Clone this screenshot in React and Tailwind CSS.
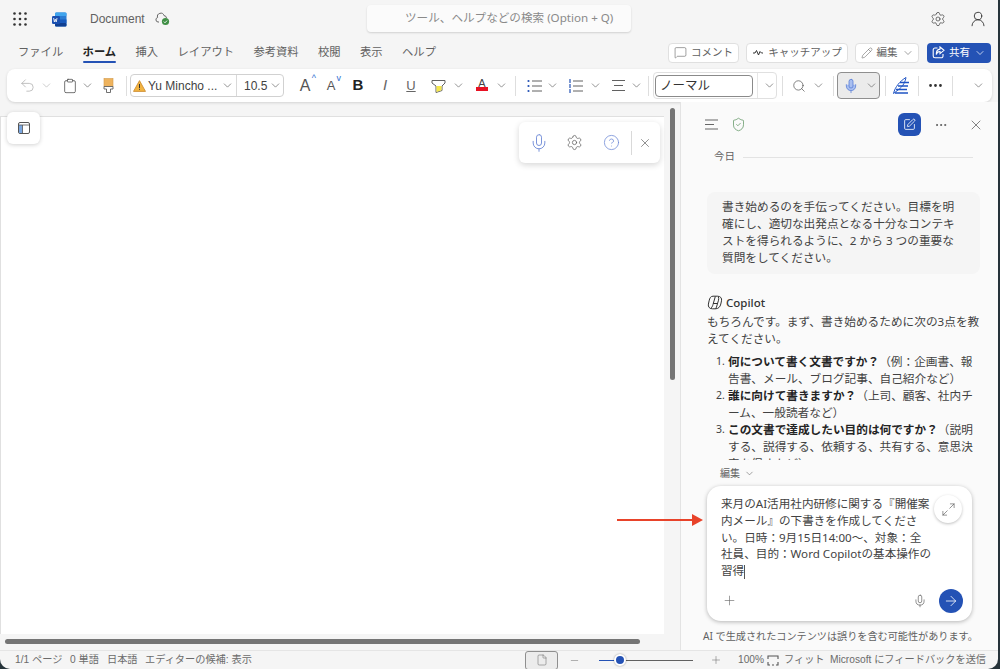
import React from "react";
import {
  Settings, UserRound, MessageSquare, Pencil, ChevronDown, Undo2, Clipboard, Search, Mic, X, CircleHelp,
  Ellipsis, Plus, ArrowRight, Maximize2, Minus, File, SquarePen, ShieldCheck,
} from "lucide-react";

const Chev = ({ w = "w-[14px]", ml = "", color = "text-[#616161]" }) => (
  <span className={`${w} ${ml} flex justify-center ${color}`}><ChevronDown size={13} strokeWidth={1.25} /></span>
);
const Sep = ({ ml }) => <span className={`w-px h-[20px] bg-[#dedede] ${ml}`} />;
const Cell = ({ ml = "", children, cls = "" }) => <span className={`w-[20px] ${ml} flex justify-center items-center ${cls}`}>{children}</span>;

const Grid = () => (
  <svg width="14" height="14" viewBox="0 0 14 14" fill="#333">
    {[1.5, 7, 12.5].map((y) => [1.5, 7, 12.5].map((x) => <circle key={`${x}-${y}`} cx={x} cy={y} r="1.3" />))}
  </svg>
);
const WordLogo = () => (
  <svg width="15" height="15" viewBox="0 0 15 15">
    <rect x="3" y="0.5" width="11.5" height="14" rx="1.5" fill="#2b7cd3" />
    <rect x="3" y="0.5" width="11.5" height="3.5" rx="1" fill="#41a5ee" />
    <rect x="3" y="7.5" width="11.5" height="3.5" fill="#185abd" />
    <rect x="3" y="11" width="11.5" height="3.5" rx="1" fill="#103f91" />
    <rect x="0" y="4" width="8" height="8" rx="1.2" fill="#1a4fb0" />
    <path d="M1.6 6l.8 4 .9-2.8.9 2.8.8-4" stroke="#fff" strokeWidth=".8" fill="none" />
  </svg>
);
const CloudOk = () => (
  <svg width="15" height="14" viewBox="0 0 15 14" fill="none">
    <path d="M4 10H3a2.3 2.3 0 0 1-.4-4.5A3.3 3.3 0 0 1 9 3.6 2.7 2.7 0 0 1 11.5 6" stroke="#666" strokeWidth="1" />
    <circle cx="10.5" cy="9.5" r="3.6" fill="#3f8f45" />
    <path d="M8.8 9.6l1.2 1.2 2-2.2" stroke="#fff" strokeWidth=".9" />
  </svg>
);
const Brush = () => (
  <svg width="11" height="15" viewBox="0 0 11 15" fill="none">
    <rect x="1" y="0.5" width="9" height="8" fill="#eeb35e" stroke="#d39a48" strokeWidth=".6" />
    <path d="M1 8.5h9v2.5H7.5v3.5h-4V11H1z" fill="#fff" stroke="#616161" strokeWidth=".9" />
  </svg>
);
const Warn = () => (
  <svg width="13" height="12" viewBox="0 0 13 12">
    <path d="M6.5.6l6 10.8H.5z" fill="#f2b441" stroke="#c9872a" strokeWidth=".8" strokeLinejoin="round" />
    <rect x="6" y="4" width="1" height="4" fill="#333" />
    <rect x="6" y="8.8" width="1" height="1" fill="#333" />
  </svg>
);
const List = ({ kind }) => (
  <svg width="15" height="14" viewBox="0 0 15 14" fill="none">
    {[2, 7, 12].map((y) => (
      <g key={y}>
        <path d={`M5 ${y}H15`} stroke="#616161" strokeWidth="1" />
        {kind === "b" ? <circle cx="1.5" cy={y} r="1.1" fill="#2452b5" /> : <path d={`M2 ${y - 2}v4`} stroke="#2452b5" strokeWidth="1.2" />}
      </g>
    ))}
  </svg>
);
const Align = () => (
  <svg width="15" height="13" viewBox="0 0 15 13" stroke="#616161" strokeWidth="1"><path d="M1 1.5H14M3 6.5H12M1 11.5H14" /></svg>
);
const EditorPen = () => (
  <svg width="19" height="19" viewBox="0 0 19 19" fill="none" stroke="#1f54c4">
    <path d="M1.5 17.5C3 11 8 5 14 1.5c-.5 3-2.5 9-8 12.5z" strokeWidth="1" />
    <path d="M8 6.5h9M6 10h10M4 13.5h11M3 17h13" strokeWidth="1.5" />
  </svg>
);
const Pane = () => (
  <svg width="12" height="12" viewBox="0 0 12 12" fill="none">
    <rect x=".5" y=".5" width="11" height="11" rx="1.5" stroke="#555" />
    <rect x="1" y="3" width="3.5" height="8" fill="#7ba7e0" />
    <path d="M.5 3h11M4.5 3v8.5" stroke="#555" strokeWidth=".8" />
  </svg>
);
const Lines = () => (
  <svg width="14" height="11" viewBox="0 0 14 11" stroke="#666" strokeWidth="1"><path d="M0 1H13M0 5.5H9M0 10H13" /></svg>
);
const CopilotMark = () => (
  <svg width="16" height="15" viewBox="0 0 16 15" fill="none" stroke="#333" strokeWidth="1">
    <path d="M6 1.2h4.5c3 0 4.6 2 4 4.6l-.7 3.2c-.6 3-2.6 4.8-5.3 4.8H5.500c-3 0-4.700-2-4.100-4.700l.7-3.200C2.700 3 3.700 1.200 6 1.200z" />
    <path d="M8.300 1.500L6 9.500c-.4 1.600-1.300 3.300-2.400 4M11.300 1.800c.5 1 .5 2.200.2 3.400L9.500 12c-.2.700-.6 1.300-1.200 1.700M6 8.500h4" />
  </svg>
);
const FitIcon = () => (
  <svg width="12" height="11" viewBox="0 0 12 11" stroke="#555" strokeWidth="1.1" fill="none">
    <path d="M1 4V1h10v3M1 7v3h2M11 7v3H9" /><path d="M5 10h2" />
  </svg>
);
const ShareIcon = () => (
  <svg width="13" height="13" viewBox="0 0 13 13" fill="none" stroke="#fff" strokeWidth="1.100">
    <path d="M5.500 2H3a1.800 1.800 0 0 0-1.800 1.800V10A1.800 1.800 0 0 0 3 11.800h6.200A1.800 1.800 0 0 0 11 10V8" />
    <path d="M8 1l4 3.300-4 3.300V5.500C6 5.500 4.800 6.500 4.300 8.500 4.200 5.200 5.800 3.300 8 3.100z" />
  </svg>
);

const latin = "font-['Liberation_Sans','Noto_Sans_CJK_JP',sans-serif]";

const Toolbar = () => (
  <div className="mx-[7px] h-[33px] w-[985px] bg-white rounded-[8px] shadow-[0_1px_3px_rgba(0,0,0,0.14)] flex items-center pl-[10px] text-[#424242]">
    <Cell><Undo2 size={17} strokeWidth={1} className="text-[#a8a8a8]" /></Cell>
    <Chev w="w-[18px]" color="text-[#b5b5b5]" />
    <Cell ml="ml-[5px]"><Clipboard size={16} strokeWidth={1.1} /></Cell>
    <Chev />
    <Cell ml="ml-[4px]"><Brush /></Cell>
    <Sep ml="ml-[8px]" />
    <div className={`ml-[3px] w-[154px] h-[23px] border border-[#d1d1d1] rounded-[4px] flex items-center text-[12px] ${latin}`}>
      <span className="ml-[2px]"><Warn /></span>
      <span className="ml-[2px] w-[70px] whitespace-nowrap">Yu Mincho ...</span>
      <Chev ml="ml-[2px]" />
      <span className="ml-[2px] w-px h-full bg-[#d9d9d9]" />
      <span className="ml-[7px] w-[22px]">10.5</span>
      <Chev ml="ml-[2px]" />
    </div>
    <Cell ml="ml-[11px]" cls={`relative text-[16px] text-[#555] ${latin}`}>A<span className="absolute right-[-1px] top-[-2px] text-[9px] text-[#2f6fd1]">^</span></Cell>
    <Cell ml="ml-[6px]" cls={`relative text-[13px] text-[#555] ${latin}`}>A<span className="absolute right-[0px] top-[-4px] text-[9px] text-[#2f6fd1]">v</span></Cell>
    <Cell ml="ml-[7px]" cls={`text-[15px] font-bold text-[#222] ${latin}`}>B</Cell>
    <Cell ml="ml-[7px]" cls={`text-[15px] italic text-[#666] ${latin}`}>I</Cell>
    <Cell ml="ml-[6px]" cls={`text-[13px] underline text-[#666] ${latin}`}>U</Cell>
    <Cell ml="ml-[7px]">
      <svg width="15" height="14" viewBox="0 0 15 14" fill="none">
        <path d="M1 1.500h13v2.500L11 7v4.500l-6 2V7L1 4z" fill="#fff" stroke="#616161" />
        <path d="M5.500 7h5v4.200l-5 1.700z" fill="#f5e84a" />
      </svg>
    </Cell>
    <Chev ml="ml-[3px]" />
    <Cell ml="ml-[7px]" cls={`relative ${latin}`}>
      <span className="text-[11px] leading-[11px] mt-[-5px]">A</span>
      <span className="absolute left-[4px] bottom-[-2px] w-[12px] h-[4px] bg-[#e81123]" />
    </Cell>
    <Chev ml="ml-[2px]" />
    <Sep ml="ml-[7px]" />
    <Cell ml="ml-[8px]"><List kind="b" /></Cell>
    <Chev ml="ml-[1px]" />
    <Cell ml="ml-[6px]"><List kind="n" /></Cell>
    <Chev ml="ml-[3px]" />
    <Cell ml="ml-[6px]"><Align /></Cell>
    <Chev ml="ml-[1px]" />
    <Sep ml="ml-[5px]" />
    <div className="ml-[4px] w-[124px] h-[27px] border border-[#e0e0e0] rounded-[4px] flex items-center">
      <span className="ml-[1px] w-[101px] h-[22px] border border-[#8a8a8a] rounded-[4px] pl-[4px] text-[12.5px] leading-[20px] text-[#333]">ノーマル</span>
      <span className="ml-[4px] w-px h-full bg-[#e6e6e6]" />
      <span className="ml-[5px]"><ChevronDown size={13} strokeWidth={1.25} className="text-[#616161]" /></span>
    </div>
    <Sep ml="ml-[5px]" />
    <Cell ml="ml-[6px]"><Search size={14} strokeWidth={1.1} /></Cell>
    <Chev ml="ml-[2px]" />
    <Sep ml="ml-[8px]" />
    <div className="ml-[3px] w-[43px] h-[27px] bg-[#ebebeb] border border-[#8f8f8f] rounded-[4px] flex items-center pl-[5px]">
      <Mic size={16} strokeWidth={1.2} className="text-[#5b7fd6] fill-[#a9bff0]" />
      <span className="ml-[6px]"><ChevronDown size={13} strokeWidth={1.25} className="text-[#616161]" /></span>
    </div>
    <Sep ml="ml-[5px]" />
    <Cell ml="ml-[5px]"><EditorPen /></Cell>
    <Sep ml="ml-[7px]" />
    <Cell ml="ml-[6px]"><Ellipsis size={17} strokeWidth={2} className="text-[#333]" /></Cell>
    <Sep ml="ml-[7px]" />
    <Chev ml="ml-[18px]" />
  </div>
);

const Tab = ({ children, active }) => (
  <span className={`relative whitespace-nowrap ${active ? "font-bold text-[#242424]" : "text-[#616161]"}`}>
    {children}
    {active && <span className="absolute left-0 right-0 bottom-[-3px] h-[2px] bg-[#2452b5] rounded" />}
  </span>
);
const Btn = ({ w, ml, children }) => (
  <div className={`${w} ${ml} h-[20px] bg-white border border-[#e0e0e0] rounded-[4px] flex items-center justify-center gap-[4px] text-[10.500px] text-[#616161] whitespace-nowrap`}>{children}</div>
);

const Ln = ({ children }) => <span className="block whitespace-nowrap">{children}</span>;
const Num = ({ n }) => <span className="block relative w-0 h-0 left-[-12px] text-[10.500px] leading-[17px]">{n}</span>;

const Copilot = () => (
  <div className="w-[320px] h-full bg-[#fafafa] border-l border-[#e3e3e3] flex flex-col text-[#424242] shrink-0">
    <div className="h-[44px] flex items-center pt-[1px] pl-[24px] shrink-0">
      <Lines />
      <span className="ml-[12px]"><ShieldCheck size={15} strokeWidth={1.1} className="text-[#4f8a53]" /></span>
      <span className="ml-[152px] w-[23px] h-[23px] rounded-[6px] bg-[#2452b5] flex items-center justify-center text-white"><SquarePen size={13} strokeWidth={1.5} /></span>
      <span className="ml-[13px]"><Ellipsis size={14} strokeWidth={1.6} className="text-[#555]" /></span>
      <span className="ml-[20px]"><X size={16} strokeWidth={1.1} className="text-[#555]" /></span>
    </div>
    <div className="h-[314px] overflow-hidden shrink-0 pl-[26px] text-[11.670px] leading-[17px]">
      <div className="flex items-center h-[20px] text-[10.500px] text-[#616161] pl-[7px]">
        今日<span className="ml-[8px] mt-[2px] w-[230px] h-px bg-[#e3e3e3]" />
      </div>
      <div className="mt-[26px] w-[273px] h-[82px] bg-[#f5f5f5] rounded-[8px] pl-[15px] pt-[6px]">
        <Ln>書き始めるのを手伝ってください。目標を明</Ln>
        <Ln>確にし、適切な出発点となる十分なコンテキ</Ln>
        <Ln>ストを得られるように、2 から 3 つの重要な</Ln>
        <Ln>質問をしてください。</Ln>
      </div>
      <div className="mt-[19px] flex items-center h-[18px] text-[#333] font-medium text-[11.500px]">
        <CopilotMark /><span className="ml-[3px]">Copilot</span>
      </div>
      <div className="mt-[2px]">
        <Ln>もちろんです。まず、書き始めるために次の3点を教</Ln>
        <Ln>えてください。</Ln>
      </div>
      <div className="mt-[6px] pl-[21px]">
        <Num n="1." />
        <Ln><b className="text-[#242424]">何について書く文書ですか？</b>（例：企画書、報</Ln>
        <Ln>告書、メール、ブログ記事、自己紹介など）</Ln>
        <Num n="2." />
        <Ln><b className="text-[#242424]">誰に向けて書きますか？</b>（上司、顧客、社内チ</Ln>
        <Ln>ーム、一般読者など）</Ln>
        <Num n="3." />
        <Ln><b className="text-[#242424]">この文書で達成したい目的は何ですか？</b>（説明</Ln>
        <Ln>する、説得する、依頼する、共有する、意思決</Ln>
        <Ln>定を促すなど）</Ln>
      </div>
    </div>
    <div className="pl-[39px] mt-[5px] h-[16px] flex items-center text-[10px] text-[#616161]">
      編集<ChevronDown size={11} strokeWidth={1.25} className="ml-[4px]" />
    </div>
    <div className="relative ml-[26px] mt-[5px] w-[265px] h-[135px] bg-white rounded-[14px] shadow-[0_1px_4px_rgba(0,0,0,0.28)] shrink-0 flex flex-col">
      <div className="pl-[14px] pt-[10px] text-[11.600px] leading-[16.800px] text-[#424242]">
        <Ln>来月のAI活用社内研修に関する『開催案</Ln>
        <Ln>内メール』の下書きを作成してくださ</Ln>
        <Ln>い。日時：9月15日14:00〜、対象：全</Ln>
        <Ln>社員、目的：Word Copilotの基本操作の</Ln>
        <Ln>習得<span className="inline-block w-px h-[14px] bg-[#555] align-middle" /></Ln>
      </div>
      <span className="absolute right-[10px] top-[9px] w-[28px] h-[28px] rounded-full bg-white shadow-[0_1px_3px_rgba(0,0,0,0.25)] flex items-center justify-center text-[#555]"><Maximize2 size={15} strokeWidth={1} /></span>
      <div className="mt-auto h-[40px] flex items-center pl-[15px] pb-[1px]">
        <Plus size={15} strokeWidth={1} className="text-[#666]" />
        <Mic size={14} strokeWidth={1.1} className="ml-[176px] text-[#555]" />
        <span className="ml-[12px] w-[24px] h-[24px] rounded-full bg-[#2452b5] flex items-center justify-center text-white"><ArrowRight size={16} strokeWidth={1.2} /></span>
      </div>
    </div>
    <div className="ml-[22px] mt-[8px] text-[10.150px] leading-[14px] whitespace-nowrap text-[#616161]">AI で生成されたコンテンツは誤りを含む可能性があります。</div>
  </div>
);

export default function App() {
  return (
    <div className="relative w-[1000px] h-[669px] bg-[#26333a] overflow-hidden font-['Noto_Sans','Noto_Sans_CJK_JP',sans-serif]">
      <div className="w-[998px] h-full bg-[#f5f5f5] rounded-b-[10px] overflow-hidden flex flex-col">
        <div className="h-[38px] flex items-center shrink-0 relative">
          <span className="ml-[13px]"><Grid /></span>
          <span className="ml-[25px]"><WordLogo /></span>
          <span className={`ml-[23px] w-[54px] text-[12px] text-[#616161] ${latin}`}>Document</span>
          <span className="ml-[11px]"><CloudOk /></span>
          <div className="ml-[197px] mt-[-1px] w-[264px] h-[27px] bg-[#fbfbfb] rounded-[4px] shadow-[0_1px_2px_rgba(0,0,0,0.15)] pl-[38px] text-[11.600px] leading-[26px] text-[#8a8a8a] whitespace-nowrap">ツール、ヘルプなどの検索 (Option + Q)</div>
          <Settings size={16} strokeWidth={1.1} className="ml-[299px] text-[#424242]" />
          <UserRound size={18} strokeWidth={1.2} className="ml-[23px] text-[#333]" />
        </div>
        <div className="h-[31px] flex items-center shrink-0 pl-[18px] pb-[2px] text-[11.300px]">
          <div className="flex gap-[19.400px] w-[650px] mt-[-1px]">
            <Tab>ファイル</Tab><Tab active>ホーム</Tab><Tab>挿入</Tab><Tab>レイアウト</Tab><Tab>参考資料</Tab><Tab>校閲</Tab><Tab>表示</Tab><Tab>ヘルプ</Tab>
          </div>
          <Btn w="w-[71px]"><MessageSquare size={13} strokeWidth={1.1} />コメント</Btn>
          <Btn w="w-[102px]" ml="ml-[7px]">
            <svg width="12" height="8" viewBox="0 0 12 8" fill="none" stroke="#333"><path d="M1 4h2l1.500-2.500L6.500 6 8 2.500 9.500 4H11" /></svg>
            キャッチアップ
          </Btn>
          <Btn w="w-[64px]" ml="ml-[7px]"><Pencil size={12} strokeWidth={1.1} />編集<ChevronDown size={12} strokeWidth={1.2} /></Btn>
          <div className="ml-[8px] w-[64px] h-[20px] bg-[#2452b5] rounded-[4px] flex items-center justify-center gap-[4px] text-[10.500px] text-white">
            <ShareIcon />共有<ChevronDown size={12} strokeWidth={1.4} />
          </div>
        </div>
        <Toolbar />
        <div className="flex-1 min-h-0 flex relative">
          <div className="w-[680px] shrink-0 relative pt-[14px]">
            <div className="w-[664px] h-[518px] bg-white border-t border-l border-[#e0e0e0]" />
            <div className="absolute left-[7px] top-[10px] w-[33px] h-[32px] bg-white rounded-[6px] shadow-[0_1px_4px_rgba(0,0,0,0.18)] flex items-center justify-center"><Pane /></div>
            <div className="absolute left-[519px] top-[20px] w-[141px] h-[41px] bg-white rounded-[6px] shadow-[0_2px_6px_rgba(0,0,0,0.16)] flex items-center pl-[10px]">
              <Mic size={20} strokeWidth={1.1} className="text-[#6f8ad6]" />
              <Settings size={17} strokeWidth={1.1} className="ml-[17px] text-[#666]" />
              <CircleHelp size={17} strokeWidth={1.1} className="ml-[20px] text-[#6f8ad6]" />
              <span className="ml-[11px] w-px h-[24px] bg-[#d9d9d9]" />
              <X size={14} strokeWidth={1.1} className="ml-[6px] text-[#555]" />
            </div>
            <div className="absolute left-[670px] top-[6px] w-[5px] h-[272px] bg-[#757575] rounded-full" />
            <div className="absolute left-[5px] top-[537px] w-[635px] h-[5px] bg-[#757575] rounded-full" />
          </div>
          <Copilot />
        </div>
        <div className={`h-[19px] shrink-0 border-t border-[#e5e5e5] flex items-center pl-[15px] text-[10.200px] text-[#6b6b6b] whitespace-nowrap ${latin}`}>
          <span className="w-[55px]">1/1 ページ</span>
          <span className="w-[37px]">0 単語</span>
          <span className="w-[38px]">日本語</span>
          <span className="w-[380px]">エディターの候補: 表示</span>
          <span className="w-[33px] h-[19px] bg-[#ececec] border border-[#8f8f8f] rounded-[3px] flex items-center justify-center"><File size={12} strokeWidth={1.1} /></span>
          <Minus size={11} strokeWidth={1.1} className="ml-[11px]" />
          <span className="ml-[19px] w-[94px] h-px bg-[#616161] relative">
            <span className="absolute left-0 w-[21px] h-px bg-[#2452b5]" />
            <span className="absolute left-[15px] top-[-6px] w-[12px] h-[12px] rounded-full bg-[#2452b5] border-[2px] border-white shadow-[0_0_2px_rgba(0,0,0,0.4)]" />
          </span>
          <Plus size={12} strokeWidth={1.1} className="ml-[17px]" />
          <span className="ml-[16px] w-[29px]">100%</span>
          <FitIcon />
          <span className="ml-[5px] w-[46px]">フィット</span>
          <span>Microsoft にフィードバックを送信</span>
        </div>
      </div>
      <svg className="absolute left-[616px] top-[513px]" width="88" height="14" viewBox="0 0 88 14">
        <path d="M1 7H78" stroke="#e8432a" strokeWidth="2" />
        <path d="M76 1l11 6-11 6z" fill="#e8432a" />
      </svg>
    </div>
  );
}
